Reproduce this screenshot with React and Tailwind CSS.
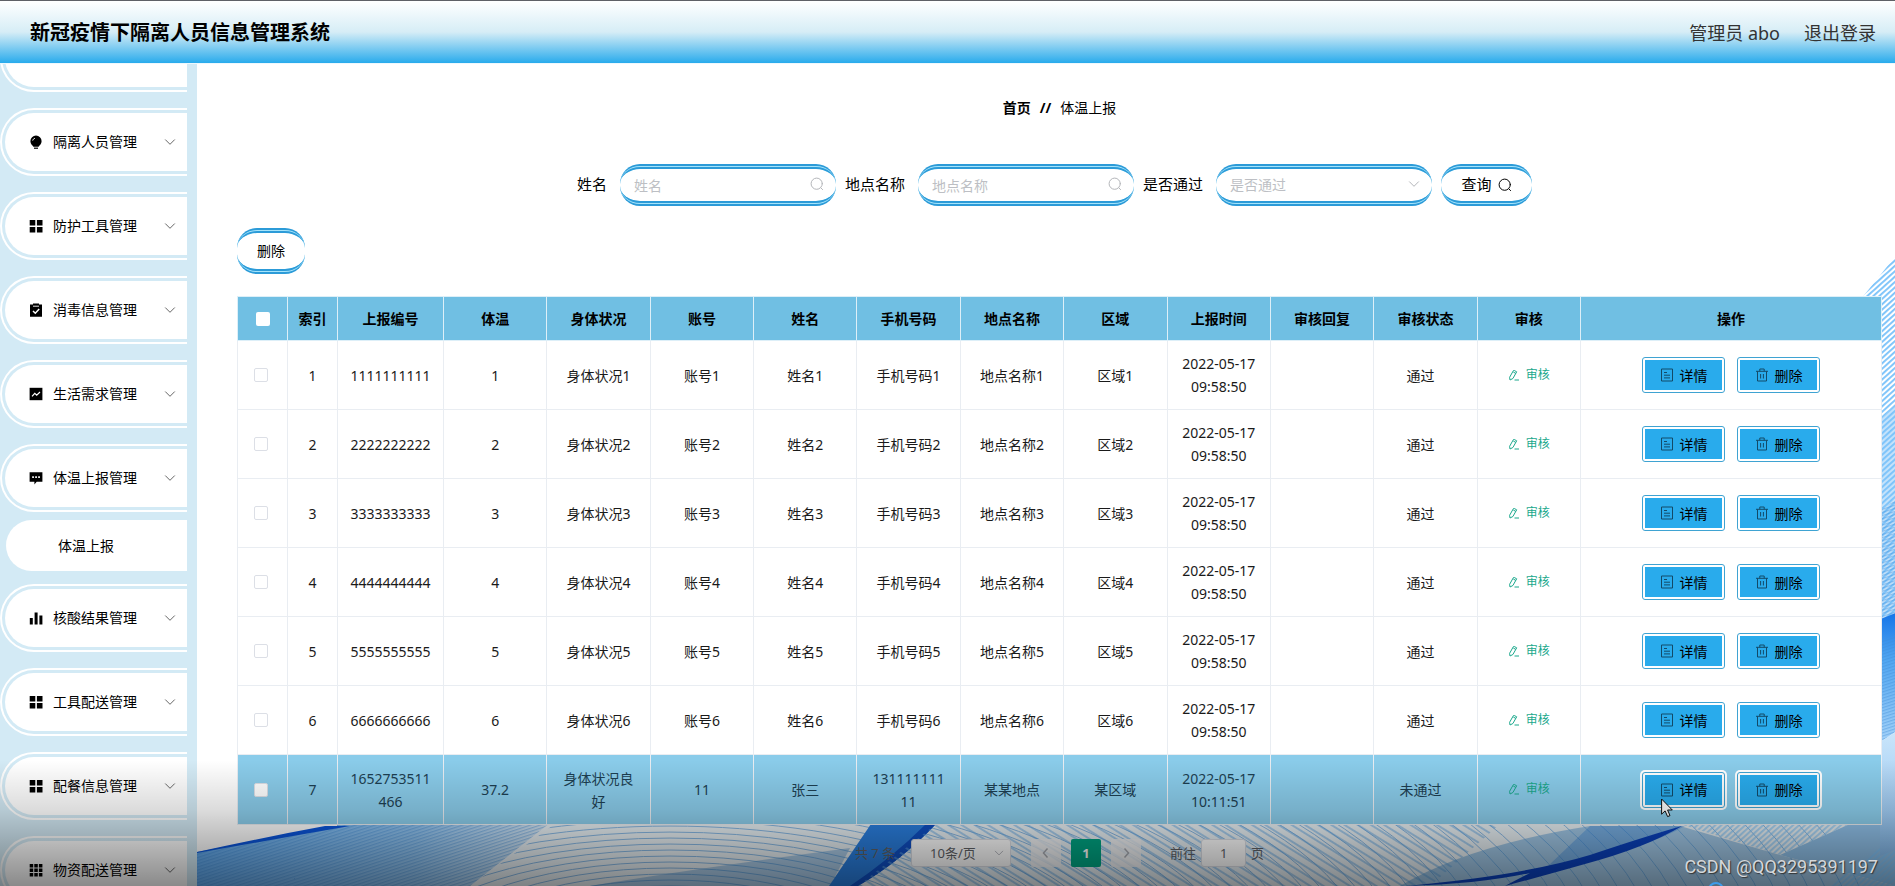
import React from 'react';

const SearchIcon = ({ className }) => (
  <svg viewBox="0 0 14 14" className={className} fill="none" stroke="currentColor" strokeWidth="1" strokeLinecap="round" aria-hidden="true">
    <circle cx="6.7" cy="6.7" r="5.6" />
    <path d="M10.9 10.9 12.6 12.6" />
  </svg>
);

const ChevronDown = ({ className }) => (
  <svg viewBox="0 0 12 12" className={className} fill="none" stroke="currentColor" strokeWidth="1" strokeLinecap="round" aria-hidden="true">
    <path d="M1.5 3.8 6 8.3l4.500-4.500" />
  </svg>
);

const Arrow = ({ d }) => (
  <svg viewBox="0 0 12 12" className="h-3 w-3" fill="none" stroke="currentColor" strokeWidth="1.5" aria-hidden="true">
    <path d={d} />
  </svg>
);

const menuIcons = {
  bulb: (
    <>
      <path d="M7 .6a5.6 5.6 0 0 0-5.6 5.6c0 2.6 1.9 3.9 3 5.6h5.2c1.100-1.700 3-3 3-5.600A5.600 5.600 0 0 0 7 .6Z" />
      <path d="M5 12.600h4v1.200H5z" />
      <path d="M3.700 5.600c.3-1.300 1.100-2 2.300-2.300" fill="none" stroke="#fff" strokeWidth="1" />
    </>
  ),
  grid: <path d="M.7 1h5.600v5.400H.7zM7.900 1h5.600v5.400H7.900zM.7 8h5.600v5.400H.7zM7.900 8h5.600v5.400H7.900z" />,
  clipboard: (
    <>
      <path d="M1 1.600h3V.4h6v1.200h3v12.200H1z" />
      <path d="M4 3.200h6" stroke="#fff" strokeWidth=".9" />
      <path d="m4 8 2.300 2.200L10.200 6" fill="none" stroke="#fff" strokeWidth="1.500" />
    </>
  ),
  trend: (
    <>
      <path d="M.6 .8h12.800v12.400H.6z" />
      <path d="m3 9.400 2.800-3 1.900 1.700L11 5" fill="none" stroke="#fff" strokeWidth="1.200" />
    </>
  ),
  chat: (
    <>
      <path d="M.6 1.300h12.800v9.400H7.700L5.400 13.400v-2.700H.6z" />
      <path d="M3.200 5.300h1.700V7H3.200zM6.200 5.300h1.700V7H6.200zM9.200 5.300h1.700V7H9.200z" fill="#fff" />
    </>
  ),
  bars: <path d="M.8 7h3v6.600h-3zM5.600 1.600h3v12h-3zM10.400 4.600h3v9h-3z" />,
  nine: <path d="M.7 1h3.500v3.400H.7zM5.300 1h3.500v3.400H5.300zM9.900 1h3.500v3.400H9.900zM.7 5.500h3.500v3.400H.7zM5.300 5.500h3.500v3.400H5.300zM9.900 5.500h3.500v3.400H9.900zM.7 10h3.500v3.400H.7zM5.300 10h3.500v3.400H5.300zM9.900 10h3.500v3.400H9.900z" />,
};

const menu = [
  { label: '', icon: '' },
  { label: '隔离人员管理', icon: 'bulb' },
  { label: '防护工具管理', icon: 'grid' },
  { label: '消毒信息管理', icon: 'clipboard' },
  { label: '生活需求管理', icon: 'trend' },
  { label: '体温上报管理', icon: 'chat', child: '体温上报' },
  { label: '核酸结果管理', icon: 'bars' },
  { label: '工具配送管理', icon: 'grid' },
  { label: '配餐信息管理', icon: 'grid' },
  { label: '物资配送管理', icon: 'nine' },
];

const headers = ['索引', '上报编号', '体温', '身体状况', '账号', '姓名', '手机号码', '地点名称', '区域', '上报时间', '审核回复', '审核状态', '审核', '操作'];

const rows = [
  ...[1, 2, 3, 4, 5, 6].map((n) => [
    n, String(n).repeat(10), n, `身体状况${n}`, `账号${n}`, `姓名${n}`, `手机号码${n}`, `地点名称${n}`, `区域${n}`, '2022-05-17 09:58:50', '', '通过',
  ]),
  [7, '1652753511466', '37.2', '身体状况良好', '11', '张三', '13111111111', '某某地点', '某区域', '2022-05-17 10:11:51', '', '未通过'],
];

function Sidebar() {
  return (
    <nav className="w-[197px] shrink-0 overflow-hidden bg-[#d3eaf5]">
      <ul className="-mt-10 flex flex-col gap-4 pr-[10px]">
        {menu.map((m, i) => (
          <li key={i}>
            <button className="flex h-[68px] w-full rounded-l-[34px] border-2 border-r-0 border-white py-[3px] pl-[3px] text-left">
              <span className="flex h-full flex-1 items-center rounded-l-[29px] bg-white pl-6 pr-[11px]">
                <svg viewBox="0 0 14 14" className="mr-[10px] h-[14px] w-[14px]" fill="currentColor" aria-hidden="true">
                  {menuIcons[m.icon]}
                </svg>
                <span className="flex-1">{m.label}</span>
                {m.label && <ChevronDown className="h-3 w-3 text-[#666]" />}
              </span>
            </button>
            {m.child && (
              <a href="#temperature" className="-mb-[3px] ml-[6px] mt-2 flex h-[51px] items-center rounded-l-[26px] bg-white pl-[52px]">
                {m.child}
              </a>
            )}
          </li>
        ))}
      </ul>
    </nav>
  );
}

function Waves() {
  const rings = Array.from({ length: 62 }, (_, i) => i);
  return (
    <svg className="absolute inset-0 h-full w-full" viewBox="197 63 1698 823" preserveAspectRatio="none" aria-hidden="true">
      <defs>
        <pattern id="diag" width="4" height="4" patternUnits="userSpaceOnUse" patternTransform="rotate(-42)">
          <rect width="4" height="1.900" fill="#7cc3fa" />
        </pattern>
        <pattern id="fine" width="3" height="3" patternUnits="userSpaceOnUse" patternTransform="rotate(-18)">
          <rect width="3" height="1.300" fill="#3b8ad4" opacity=".4" />
        </pattern>
        <pattern id="down" width="7" height="7" patternUnits="userSpaceOnUse" patternTransform="rotate(32)">
          <rect width="7" height="2" fill="#63a9e6" opacity=".5" />
        </pattern>
        <linearGradient id="leftFill" x1="0" x2="1">
          <stop offset="0" stopColor="#66adf0" />
          <stop offset=".6" stopColor="#93c5f0" />
          <stop offset="1" stopColor="#e0edf7" />
        </linearGradient>
        <linearGradient id="sideFill" x1="0" x2="0" y1="0" y2="1">
          <stop offset="0" stopColor="#1776e8" />
          <stop offset=".35" stopColor="#4fa6f2" />
          <stop offset="1" stopColor="#a8d5fa" />
        </linearGradient>
        <linearGradient id="sideLow" x1="0" x2="0" y1="0" y2="1">
          <stop offset="0" stopColor="#c9e5fb" />
          <stop offset="1" stopColor="#86bbec" />
        </linearGradient>
        <clipPath id="low"><path d="M560 820H1895V886H470Z" /></clipPath>
      </defs>

      <path d="M197 852 337 826V815H1895V886H197Z" fill="#e9f1f6" />
      <path d="M197 852 337 826V815H560L470 886H197Z" fill="url(#leftFill)" />
      <path d="M197 852 337 826V815H560L470 886H197Z" fill="url(#fine)" />
      <path d="M197 852Q260 838 325 826H350Q270 840 197 853Z" fill="#0b55da" />
      <g clipPath="url(#low)" fill="none" stroke="#5b9fdc" strokeWidth="1" opacity=".7">
        {rings.map((i) => (
          <ellipse key={i} cx="670" cy="960" rx={170 + i * 17} ry={68 + i * 6} />
        ))}
      </g>
      <path d="M590 886Q700 868 850 848L830 886Z" fill="#4a92cf" opacity=".4" />
      <path d="M871 824H936Q900 862 858 886H829Z" fill="#2a7fe0" />
      <path d="M936 824Q900 862 858 886H850Q892 858 926 824Z" fill="#0f4fc4" />
      <path d="M936 824H1500L1430 886H858Z" fill="url(#down)" />
      <path d="M1400 886Q1470 845 1590 826H1680L1780 855 1895 886Z" fill="#559bd6" opacity=".5" />
      <path d="M1548 866 1590 826H1685Q1650 846 1570 866Z" fill="#3a86dc" opacity=".4" />
      <path d="M1405 886Q1520 876 1590 855 1650 835 1682 826 1645 848 1585 864 1550 874 1505 886 1520 878 1530 873 1480 884 1405 886Z" fill="#0a41bd" />
      <path d="M1680 824H1850L1780 855Z" fill="url(#diag)" opacity=".6" />
      <path d="M1780 855 1850 824H1895V886Z" fill="#8fc0e8" />
      <path d="M1830 886 1895 835V886Z" fill="url(#diag)" opacity=".7" />

      <path d="M1862 297 1895 256V420L1880 440V297Z" fill="url(#diag)" />
      <path d="M1880 420 1895 405V620H1880Z" fill="#c3e2fb" />
      <path d="M1880 420 1895 405V620H1880Z" fill="url(#diag)" />
      <path d="M1880 510 1895 500V620H1880Z" fill="url(#fine)" />
      <path d="M1880 619 1895 613V732L1880 742Z" fill="url(#sideFill)" />
      <path d="M1880 640 1895 634V732L1880 742Z" fill="url(#fine)" />
      <path d="M1880 742 1895 732V850L1880 856Z" fill="url(#sideLow)" />
    </svg>
  );
}

const pill =
  'rounded-[20px] border-x-0 border-y-[5px] border-double border-[#2c9bd8] [background:linear-gradient(#fff,#fff)_padding-box,linear-gradient(#a5e4fb,#a5e4fb)_border-box]';

function TextField({ id, label }) {
  return (
    <div className="flex items-center gap-[13px]">
      <label htmlFor={id} className="text-[15px]">{label}</label>
      <div className="relative">
        <input id={id} placeholder={label} className={`h-[42px] w-[216px] pl-[14px] pr-8 outline-none placeholder:text-[#bdbfc4] ${pill}`} />
        <SearchIcon className="absolute right-3 top-[13px] h-[14px] w-[14px] text-[#b4b6ba]" />
      </div>
    </div>
  );
}

function RowButton({ label, children, overlay }) {
  return (
    <button className="relative h-9 w-[83px] rounded-[3px] border border-[#3fa3d2] bg-white p-[2px] ring-2 ring-white">
      <span className="flex h-full items-center justify-center gap-[6px] bg-[#29abec]">
        <svg viewBox="0 0 14 14" className="h-[14px] w-[14px]" fill="none" stroke="#134a68" strokeWidth="1" aria-hidden="true">
          {children}
        </svg>
        {label}
      </span>
      {overlay}
    </button>
  );
}

const Cursor = () => (
  <svg viewBox="0 0 12 20" className="absolute left-[18px] top-[25px] h-5 w-3" fill="#fff" stroke="#111" strokeWidth="1" aria-hidden="true">
    <path d="M.6 1v15.200l3.500-3.300 2.500 5.700 2.400-1-2.400-5.600h4.700Z" />
  </svg>
);

function DataTable() {
  return (
    <table className="mt-[22px] w-full table-fixed border-collapse text-center leading-[23px]">
      <colgroup>
        <col className="w-[50px]" />
        <col className="w-[50px]" />
        <col className="w-[106px]" />
        {Array.from({ length: 11 }, (_, i) => <col key={i} />)}
        <col className="w-[301px]" />
      </colgroup>
      <thead>
        <tr className="h-11 bg-[#70bfe3]">
          <th className="border border-[#ddeff8]">
            <input type="checkbox" aria-label="全选" className="mx-auto block h-[14px] w-[14px] appearance-none rounded-[2px] bg-white" />
          </th>
          {headers.map((h) => (
            <th key={h} className="border border-[#ddeff8] font-bold">{h}</th>
          ))}
        </tr>
      </thead>
      <tbody>
        {rows.map((row, r) => {
          const active = r === rows.length - 1;
          return (
            <tr key={r} className={active ? 'h-[70px] bg-[#8accea] text-[#1d3f52]' : 'h-[69px] bg-white text-[#1a1a1a]'}>
              <td className="border border-[#e9edf2] pr-[3px]">
                <input type="checkbox" aria-label={`选择第${r + 1}行`} className="mx-auto block h-[14px] w-[14px] appearance-none rounded-[2px] border border-[#dcdfe6] bg-white" />
              </td>
              {row.map((c, i) => (
                <td key={i} className={`break-all border border-[#e9edf2] pl-3 ${i === row.length - 1 ? 'pr-[22px]' : 'pr-3'}`}>{c}</td>
              ))}
              <td className="border border-[#e9edf2]">
                <button className="inline-flex items-center gap-[6px] text-xs text-[#1aa88c]">
                  <svg viewBox="0 0 12 12" className="h-3 w-3" fill="none" stroke="currentColor" strokeWidth="1" aria-hidden="true">
                    <path d="M6.300 1.500 8.700 2.800 4.900 9.500 2 11 1.600 8.300 5.400 1.600ZM5.300 3l2.400 1.400M6.500 11H11" />
                  </svg>
                  审核
                </button>
              </td>
              <td className="border border-[#e9edf2] text-black">
                <div className="flex items-center justify-center gap-3">
                  <RowButton label="详情" overlay={active && <Cursor />}>
                    <path d="M1.500 1h11v12h-11zM4 4.500h3M4 7.200h6M4 9.900h6" />
                  </RowButton>
                  <RowButton label="删除">
                    <path d="M1 3.300h12M4.800 3.300V1h4.400v2.300M2.500 3.300V13h9V3.300M5.600 6v4.500M8.400 6v4.500" />
                  </RowButton>
                </div>
              </td>
            </tr>
          );
        })}
      </tbody>
    </table>
  );
}

function Pagination() {
  return (
    <div className="mt-[14px] flex h-7 items-center justify-center text-[13px] text-[#606266]">
      <span className="mr-4">共 7 条</span>
      <div className="relative mr-5">
        <select aria-label="每页条数" className="h-7 w-[100px] appearance-none rounded-[3px] border border-[#dcdfe6] bg-white pl-[18px] outline-none">
          <option>10条/页</option>
        </select>
        <ChevronDown className="pointer-events-none absolute right-[7px] top-[9px] h-[10px] w-[10px] text-[#a8abb2]" />
      </div>
      <div className="flex gap-[10px]">
        <button aria-label="上一页" className="flex h-7 w-[30px] items-center justify-center rounded-[2px] bg-[#f4f4f5]/80 text-[#a8abb2]"><Arrow d="M7.500 1.500 3.500 6l4 4.500" /></button>
        <button className="h-7 w-[30px] rounded-[2px] bg-[#00a583] font-bold text-white">1</button>
        <button aria-label="下一页" className="flex h-7 w-[30px] items-center justify-center rounded-[2px] bg-[#f4f4f5]/80 text-[#a8abb2]"><Arrow d="m4.500 1.500 4 4.500-4 4.500" /></button>
      </div>
      <label htmlFor="page" className="ml-[29px] mr-[5px]">前往</label>
      <input id="page" defaultValue="1" className="mr-[5px] h-7 w-[45px] rounded-[3px] border border-[#dcdfe6] bg-white text-center outline-none" />
      <span>页</span>
    </div>
  );
}

export default function App() {
  return (
    <div className="relative flex h-screen flex-col overflow-hidden bg-white font-['Noto_Sans','Noto_Sans_CJK_SC',sans-serif] text-sm text-black">
      <header className="z-10 flex h-16 shrink-0 items-center justify-between border-b border-t border-b-[#eef8fd] border-t-[#5f6066] bg-[linear-gradient(#fff,#d6edf6_50%,#29abec)] pl-[30px] pr-[19px] pt-[2px]">
        <h1 className="text-xl font-bold">新冠疫情下隔离人员信息管理系统</h1>
        <div className="flex gap-6 text-lg text-[#333]">
          <span>管理员 abo</span>
          <a href="#logout">退出登录</a>
        </div>
      </header>

      <div className="flex min-h-0 flex-1">
        <Sidebar />
        <main className="relative min-w-0 flex-1 overflow-hidden">
          <Waves />
          <div className="relative pl-10 pr-[13px] pt-[33px]">
            <div className="flex h-[22px] items-center justify-center gap-[9px]">
              <a href="#home" className="font-bold">首页</a>
              <span className="font-bold">//</span>
              <span>体温上报</span>
            </div>

            <form className="mt-[45px] flex items-center justify-center gap-[9px] pr-[10px]" onSubmit={(e) => e.preventDefault()}>
              <TextField id="name" label="姓名" />
              <TextField id="place" label="地点名称" />
              <div className="flex items-center gap-[13px]">
                <label htmlFor="passed" className="text-[15px]">是否通过</label>
                <div className="relative">
                  <select id="passed" className={`h-[42px] w-[216px] appearance-none pl-[14px] text-[#bdbfc4] outline-none ${pill}`}>
                    <option>是否通过</option>
                  </select>
                  <ChevronDown className="pointer-events-none absolute right-3 top-[14px] h-3 w-3 text-[#b4b6ba]" />
                </div>
              </div>
              <button className={`flex h-[42px] w-[91px] items-center justify-center gap-[6px] text-[15px] ${pill}`}>
                查询
                <SearchIcon className="h-[14px] w-[14px]" />
              </button>
            </form>

            <button className={`mt-[22px] block h-[46px] w-[68px] ${pill}`}>删除</button>

            <DataTable />
            <Pagination />
          </div>
        </main>
      </div>

      <div className="pointer-events-none absolute inset-x-0 bottom-0 z-20 h-[126px] bg-[linear-gradient(transparent,rgba(0,0,0,0.14)_40%,rgba(0,0,0,0.46))]" />
      <div className="pointer-events-none absolute bottom-0 right-[171px] z-20 h-1 w-4 overflow-hidden">
        <div className="h-4 w-4 rounded-full border-2 border-[#3d9bea]" />
      </div>
      <div className="pointer-events-none absolute bottom-[5px] right-[17px] z-20 font-['Roboto',sans-serif] text-lg text-[#d4d7da] [text-shadow:1px_1px_1px_#333]">
        CSDN @QQ3295391197
      </div>
    </div>
  );
}
